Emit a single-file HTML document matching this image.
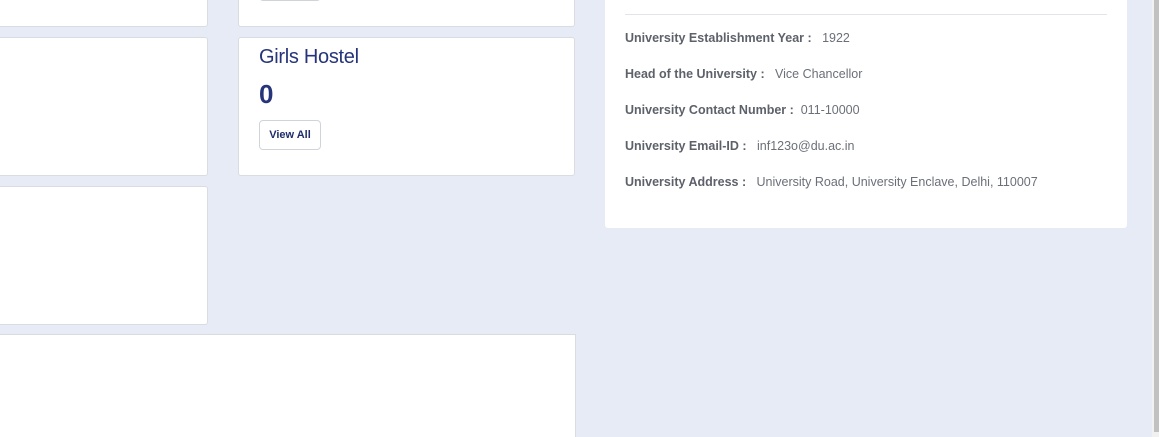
<!DOCTYPE html>
<html style="overflow:hidden;width:1159px;height:437px"><head><style>
html,body{margin:0;width:1159px;height:437px;overflow:hidden}
body{background:#e6ebf5;font-family:"Liberation Sans",Arial,sans-serif;position:relative}
.c{position:absolute;background:#fff;border:1px solid #d9dde3;border-radius:3px;box-sizing:border-box}
.btn{position:absolute;border:1px solid #d0d4da;border-radius:4px;background:#fff;font-size:11px;font-weight:bold;color:#1f2d6b;text-align:center;box-sizing:border-box}
.row{position:absolute;left:625px;font-size:12.5px;color:#6b6f78;white-space:nowrap}
.row b{color:#5d616a}
</style></head><body>
<div class="c" style="left:-5px;top:-5px;width:213px;height:32px"></div>
<div class="c" style="left:238px;top:-5px;width:337px;height:32px"></div>
<div class="btn" style="left:259px;top:-10px;width:62px;height:11px"></div>
<div class="c" style="left:-5px;top:37px;width:213px;height:139px"></div>
<div class="c" style="left:238px;top:37px;width:337px;height:139px">
<div style="position:absolute;left:20px;top:8px;font-size:20px;color:#26357a;letter-spacing:-0.3px">Girls Hostel</div>
<div style="position:absolute;left:20px;top:41px;font-size:26px;color:#26357a;font-weight:bold">0</div>
</div>
<div class="btn" style="left:259px;top:120px;width:62px;height:30px;line-height:28px">View All</div>
<div class="c" style="left:-5px;top:186px;width:213px;height:139px"></div>
<div style="position:absolute;left:0;top:334px;width:576px;height:103px;background:#fff;border-top:1px solid #d9dde3;border-right:1px solid #d9dde3;box-sizing:border-box"></div>
<div style="position:absolute;left:605px;top:-5px;width:522px;height:233px;background:#fff;border-radius:3px"></div>
<div style="position:absolute;left:625px;top:14px;width:482px;height:1px;background:#e2e4e8"></div>
<div class="row" style="top:31px"><b>University Establishment Year :</b>&nbsp;&nbsp; 1922</div>
<div class="row" style="top:67px"><b>Head of the University :</b>&nbsp;&nbsp; Vice Chancellor</div>
<div class="row" style="top:103px"><b>University Contact Number :</b>&nbsp; 011-10000</div>
<div class="row" style="top:139px"><b>University Email-ID :</b>&nbsp;&nbsp; inf123o@du.ac.in</div>
<div class="row" style="top:175px"><b>University Address :</b>&nbsp;&nbsp; University Road, University Enclave, Delhi, 110007</div>
<div style="position:absolute;left:1152px;top:0;width:7px;height:437px;background:#f1f1f1"></div>
<div style="position:absolute;left:1154px;top:0;width:5px;height:432px;background:#c1c1c1"></div>
</body></html>
